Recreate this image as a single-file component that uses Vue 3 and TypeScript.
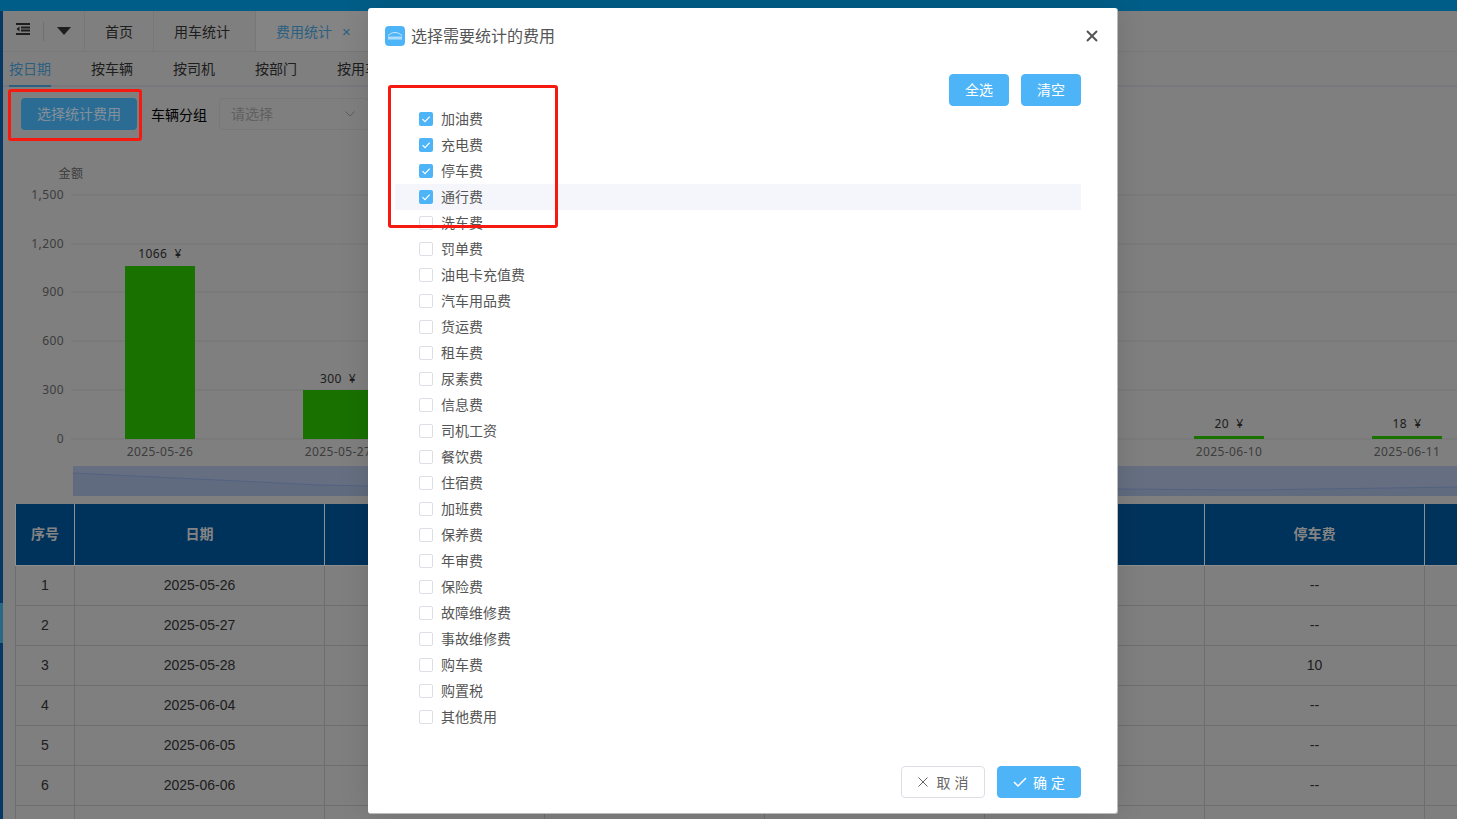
<script setup lang="ts">
const fees = ['加油费','充电费','停车费','通行费','洗车费','罚单费','油电卡充值费','汽车用品费','货运费','租车费','尿素费','信息费','司机工资','餐饮费','住宿费','加班费','保养费','年审费','保险费','故障维修费','事故维修费','购车费','购置税','其他费用']
const checked = new Set(['加油费','充电费','停车费','通行费'])
const subTabs = ['按日期','按车辆','按司机','按部门','按用车人']
const yAxis = [
  { label: '1,500', y: 195 }, { label: '1,200', y: 244 }, { label: '900', y: 292 },
  { label: '600', y: 341 }, { label: '300', y: 390 }, { label: '0', y: 439 },
]
const bars = [
  { x: 125, value: '1066\u00a0\u00a0¥', date: '2025-05-26', h: 173, ly: 258 },
  { x: 303, value: '300\u00a0\u00a0¥', date: '2025-05-27', h: 49, ly: 383 },
  { x: 1194, value: '20\u00a0\u00a0¥', date: '2025-06-10', h: 3, ly: 428 },
  { x: 1372, value: '18\u00a0\u00a0¥', date: '2025-06-11', h: 3, ly: 428 },
]
const rows = [
  { n: '1', d: '2025-05-26', p: '--' }, { n: '2', d: '2025-05-27', p: '--' }, { n: '3', d: '2025-05-28', p: '10' },
  { n: '4', d: '2025-06-04', p: '--' }, { n: '5', d: '2025-06-05', p: '--' }, { n: '6', d: '2025-06-06', p: '--' },
  { n: '', d: '', p: '' },
]
</script>

<template>
  <div class="page">
    <header class="topbar"></header>
    <div class="shell">
      <aside class="side"><i class="side-active"></i></aside>
      <main class="main">
        <div class="tabs">
          <div class="tool">
            <svg width="14" height="12" viewBox="0 0 14 12"><path d="M0 1h14M5 4.500h9M5 7.500h9M0 11h14" stroke="#333" stroke-width="2" fill="none"/><path d="M3.500 3.500 .5 6l3 2.500z" fill="#333"/></svg>
          </div>
          <div class="tool-sep"></div>
          <div class="tool drop"><i class="tri"></i></div>
          <div class="tab first">首页</div>
          <div class="tab second">用车统计</div>
          <div class="tab active">费用统计<span class="tab-x">×</span></div>
        </div>
        <div class="subtabs">
          <div v-for="(t, i) in subTabs" :key="t" class="subtab" :class="{ on: i === 0 }">{{ t }}</div>
        </div>
        <div class="toolbar">
          <button class="select-btn"><span class="lift">选择统计费用</span></button>
          <span class="group-label">车辆分组</span>
          <div class="select"><span class="lift">请选择</span>
            <svg width="10" height="6" viewBox="0 0 10 6"><path d="M.5.500 5 5 9.500.500" stroke="#999" fill="none"/></svg>
          </div>
        </div>
        <svg class="chart" width="1454" height="363" viewBox="3 141 1454 363">
          <text x="71" y="178" text-anchor="middle" class="axis">金额</text>
          <g v-for="a in yAxis" :key="a.label">
            <line x1="71" x2="1457" :y1="a.y" :y2="a.y" class="grid" />
            <text x="64" :y="a.y + 3.500" text-anchor="end" class="axis">{{ a.label }}</text>
          </g>
          <g v-for="b in bars" :key="b.date">
            <rect :x="b.x" :y="439 - b.h" width="70" :height="b.h" fill="#2bbd00" />
            <text :x="b.x + 35" :y="b.ly" text-anchor="middle" class="val">{{ b.value }}</text>
            <text :x="b.x + 35" y="456" text-anchor="middle" class="axis">{{ b.date }}</text>
          </g>
          <rect x="73" y="466" width="1384" height="30" fill="#a9b9d8" />
          <path d="M73 473 L320 485 L370 486 L1100 486 L1120 489 L1250 490 L1457 487 V496 H73Z" fill="#8fa5cf" opacity=".35" />
          <path d="M73 473 L320 485 L370 486 L1100 486 L1120 489 L1250 490 L1457 487" fill="none" stroke="#8ba3d6" />
        </svg>
        <table class="grid-table">
          <colgroup>
            <col class="c-n" /><col class="c-d" /><col class="c-v" /><col class="c-v" /><col class="c-v" /><col class="c-v" /><col class="c-v" /><col class="c-v" />
          </colgroup>
          <thead>
            <tr><th>序号</th><th>日期</th><th></th><th></th><th></th><th></th><th>停车费</th><th></th></tr>
          </thead>
          <tbody>
            <tr v-for="(r, i) in rows" :key="i">
              <td>{{ r.n }}</td><td>{{ r.d }}</td><td></td><td></td><td></td><td></td><td>{{ r.p }}</td><td></td>
            </tr>
          </tbody>
        </table>
      </main>
    </div>

    <div class="mask"></div>
    <section class="dialog">
      <div class="dlg-head">
        <div class="logo">
          <svg width="20" height="20" viewBox="0 0 20 20"><path d="M3 9.500c2-1 3-3 7-3s5 2 7 3" stroke="#cfeaff" fill="none"/><rect x="3" y="10.500" width="14" height="3" fill="#c4e7ff" opacity=".8"/></svg>
        </div>
        <span class="dlg-title">选择需要统计的费用</span>
        <svg class="close" width="14" height="14" viewBox="0 0 14 14"><path d="M2 2l10 10M12 2 2 12" stroke="#555" stroke-width="2" fill="none"/></svg>
      </div>
      <div class="dlg-actions">
        <button class="btn primary small"><span class="lift">全选</span></button>
        <button class="btn primary small"><span class="lift">清空</span></button>
      </div>
      <ul class="list">
        <li v-for="f in fees" :key="f" class="item" :class="{ hover: f === '通行费' }">
          <span class="box" :class="{ on: checked.has(f) }">
            <svg v-if="checked.has(f)" width="14" height="14" viewBox="0 0 14 14"><path d="M3.500 7.200 6 9.700l4.700-5" stroke="#fff" fill="none" stroke-width="1.200"/></svg>
          </span>
          <span class="label">{{ f }}</span>
        </li>
      </ul>
      <div class="dlg-foot">
        <button class="btn plain">
          <svg width="10" height="10" viewBox="0 0 10 10"><path d="M.5.500l9 9M9.500.500l-9 9" stroke="#666" fill="none"/></svg>
          <span>取 消</span>
        </button>
        <button class="btn primary ok">
          <svg width="14" height="10" viewBox="0 0 14 10"><path d="M1 5l4 4 8-8" stroke="#fff" stroke-width="1.500" fill="none"/></svg>
          <span>确 定</span>
        </button>
      </div>
    </section>

    <i class="mark mark-btn"></i>
    <i class="mark mark-list"></i>
  </div>
</template>

<style>
html, body { margin: 0; overflow: hidden; }
</style>

<style scoped>
.page {
  position: relative; width: 1457px; height: 819px; overflow: hidden; background: #d4d4d4;
  font-family: "Liberation Sans", "Noto Sans CJK SC", sans-serif; font-size: 14px; color: #333;
}
.lift { display: block; padding-bottom: 2px; }
.topbar { height: 11px; background: #009be1; }
.shell { display: flex; height: 808px; }
.side { width: 3px; flex: none; background: #0a5ea8; padding-top: 592px; box-sizing: border-box; }
.side-active { display: block; height: 40px; background: #45b0e0; }
.main { flex: 1; min-width: 0; overflow: hidden; }
.tabs { display: flex; align-items: stretch; height: 41px; border-bottom: 1px solid #c8c8cc; box-sizing: border-box; }
.tool { width: 40px; display: flex; align-items: center; justify-content: center; padding-bottom: 4px; box-sizing: border-box; }
.tool-sep { width: 1px; height: 19px; margin-top: 11px; background: #bbb; }
.tool.drop { padding-bottom: 1px; }
.tri { width: 0; height: 0; border: 7px solid transparent; border-top: 8px solid #333; border-bottom: 0; }
.tab { display: flex; align-items: center; padding-left: 20px; border-left: 1px solid #c6c6c6; box-sizing: border-box; color: #333; }
.tab.first { width: 69px; }
.tab.second { width: 102px; }
.tab.active { width: 114px; background: #dcdcdc; color: #49a0d8; border-right: 1px solid #c6c6c6; }
.tab-x { margin-left: 10px; font-size: 15px; color: #49a0d8; }
.subtabs { display: flex; height: 35px; padding-left: 6px; gap: 40px; border-bottom: 2px solid #c6c6d0; box-sizing: border-box; }
.subtab { height: 35px; line-height: 34px; box-sizing: border-box; white-space: nowrap; color: #333; }
.subtab.on { color: #49a0d8; border-bottom: 2px solid #49a0d8; }
.toolbar { height: 54px; display: flex; align-items: flex-start; padding: 11px 0 0 18px; box-sizing: border-box; }
.select-btn { width: 116px; height: 32px; border: 0; border-radius: 4px; background: #49b4f8; color: #dbeeff; font: inherit; padding: 0; }
.group-label { margin-left: 14px; line-height: 34px; color: #000; }
.select { margin-left: 12px; width: 150px; height: 32px; border: 1px solid #c9c9c9; border-radius: 4px; display: flex; align-items: center; justify-content: space-between; padding: 0 13px 0 11px; box-sizing: border-box; color: #a0a0a0; }
.chart { display: block; }
.chart text { font-family: "Noto Sans", "Noto Sans CJK SC", sans-serif; font-size: 12px; letter-spacing: .4px; }
.axis { fill: #666; }
.val { fill: #333; }
.grid { stroke: #c4c4c4; }
.grid-table { margin-left: 12px; width: 1520px; border-collapse: collapse; table-layout: fixed; }
.c-n { width: 59px; }
.c-d { width: 250px; }
.c-v { width: 220px; }
.grid-table th { height: 61px; background: #005599; border: 1px solid #f0f0f0; border-top: 0; color: #ddd; font-size: 14px; font-weight: 700; padding: 0 0 2px; box-sizing: border-box; }
.grid-table td { height: 40px; box-sizing: border-box; border: 1px solid #b8b8bc; text-align: center; color: #333; font-size: 14px; padding: 0 0 1px; }

.mask { position: absolute; inset: 0; background: rgba(0, 0, 0, .4); }
.dialog {
  position: absolute; left: 368px; top: 8px; width: 750px; height: 806px; box-sizing: border-box;
  background: #fff; border-radius: 3px; border-right: 1px solid #bbb; border-bottom: 1px solid #bbb;
  box-shadow: 0 0 30px rgba(0, 0, 0, .12);
  display: flex; flex-direction: column; padding: 0 36px 15px 27px;
}
.dlg-head { position: relative; display: flex; align-items: center; height: 56px; margin-left: -10px; }
.logo { width: 20px; height: 20px; border-radius: 4px; background: #4db4f7; display: flex; }
.dlg-title { margin-left: 6px; font-size: 16px; color: #555; padding-bottom: 2px; }
.close { position: absolute; right: -18px; top: 21px; }
.dlg-actions { display: flex; justify-content: flex-end; gap: 12px; margin-top: 10px; }
.list { list-style: none; margin: 0; padding: 0; }
.item { height: 26px; display: flex; align-items: center; padding-left: 24px; color: #555; }
.item.hover { background: #f5f6fb; }
.box { width: 14px; height: 14px; box-sizing: border-box; border: 1px solid #dcdfe6; border-radius: 2px; background: #fff; display: flex; flex: none; }
.box.on { background: #4db4f7; border: 0; }
.label { margin-left: 8px; padding-bottom: 2px; }
.dlg-foot { margin-top: auto; display: flex; justify-content: flex-end; gap: 12px; }
.btn { height: 32px; width: 84px; border-radius: 4px; border: 1px solid #dcdfe6; background: #fff; color: #666; font: inherit; display: flex; align-items: center; justify-content: center; gap: 9px; box-sizing: border-box; padding: 0; }
.btn.primary { background: #4db4f7; border-color: #4db4f7; color: #fff; }
.btn.ok { gap: 6px; }
.btn.small { width: 60px; }

.mark { position: absolute; box-sizing: border-box; border: 3px solid #f5190f; border-radius: 3px; }
.mark-btn { left: 8px; top: 89px; width: 134px; height: 52px; }
.mark-list { left: 388px; top: 85px; width: 170px; height: 143px; }
</style>
